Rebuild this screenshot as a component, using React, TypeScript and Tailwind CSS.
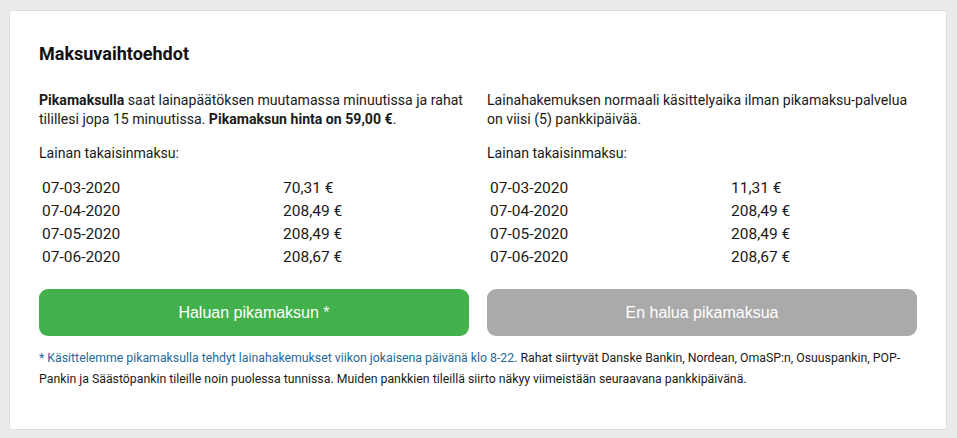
import React from 'react';

type Payment = { date: string; amount: string };

const fastPayments: Payment[] = [
  { date: '07-03-2020', amount: '70,31 €' },
  { date: '07-04-2020', amount: '208,49 €' },
  { date: '07-05-2020', amount: '208,49 €' },
  { date: '07-06-2020', amount: '208,67 €' },
];

const normalPayments: Payment[] = [
  { date: '07-03-2020', amount: '11,31 €' },
  { date: '07-04-2020', amount: '208,49 €' },
  { date: '07-05-2020', amount: '208,49 €' },
  { date: '07-06-2020', amount: '208,67 €' },
];

function PaymentTable({ rows }: { rows: Payment[] }) {
  return (
    <div className="mt-[14px] flex flex-col text-[15.5px] leading-[23px] text-[#1a1a1a]">
      {rows.map((row) => (
        <div key={row.date} className="grid grid-cols-[241px_1fr] pl-[3px]">
          <span>{row.date}</span>
          <span>{row.amount}</span>
        </div>
      ))}
    </div>
  );
}

function Option({
  children,
  rows,
  button,
  primary,
}: {
  children: React.ReactNode;
  rows: Payment[];
  button: string;
  primary?: boolean;
}) {
  return (
    <div className="flex flex-col">
      <p className="text-[14.1px] leading-[19px] text-[#1a1a1a]">{children}</p>
      <p className="mt-[15px] text-[14.1px] leading-[19px] text-[#1a1a1a]">Lainan takaisinmaksu:</p>
      <PaymentTable rows={rows} />
      <button
        className={`mt-[20px] h-[47px] rounded-[9px] text-[16px] text-white cursor-pointer font-['Liberation_Sans',Arial,sans-serif] ${
          primary ? 'bg-[#43b14b]' : 'bg-[#aaaaaa]'
        }`}
      >
        {button}
      </button>
    </div>
  );
}

export default function App() {
  return (
    <div className="min-h-[438px] bg-[#ebebeb] pl-[9px] pr-[10px] pt-[10px] pb-[9px] font-['Roboto',sans-serif]">
      <div className="border border-[#dedede] bg-white px-[29px] pt-[30px] pb-[39px]">
        <h2 className="text-[18px] font-bold leading-[25px] text-[#111]">Maksuvaihtoehdot</h2>

        <div className="mt-[25px] grid grid-cols-2 gap-[18px]">
          <Option rows={fastPayments} button="Haluan pikamaksun *" primary>
            <b className="font-bold">Pikamaksulla</b> saat lainapäätöksen muutamassa minuutissa ja rahat tilillesi
            jopa 15 minuutissa. <b className="font-bold">Pikamaksun hinta on 59,00 €</b>.
          </Option>
          <Option rows={normalPayments} button="En halua pikamaksua">
            Lainahakemuksen normaali käsittelyaika ilman pikamaksu-palvelua on viisi (5) pankkipäivää.
          </Option>
        </div>

        <p className="mt-[12px] text-[12.3px] leading-[21px] text-[#1a1a1a]">
          <span className="text-[#1f6a9a]">
            * Käsittelemme pikamaksulla tehdyt lainahakemukset viikon jokaisena päivänä klo 8-22.
          </span>{' '}
          Rahat siirtyvät Danske Bankin, Nordean, OmaSP:n, Osuuspankin, POP-Pankin ja Säästöpankin tileille noin
          puolessa tunnissa. Muiden pankkien tileillä siirto näkyy viimeistään seuraavana pankkipäivänä.
        </p>
      </div>
    </div>
  );
}
